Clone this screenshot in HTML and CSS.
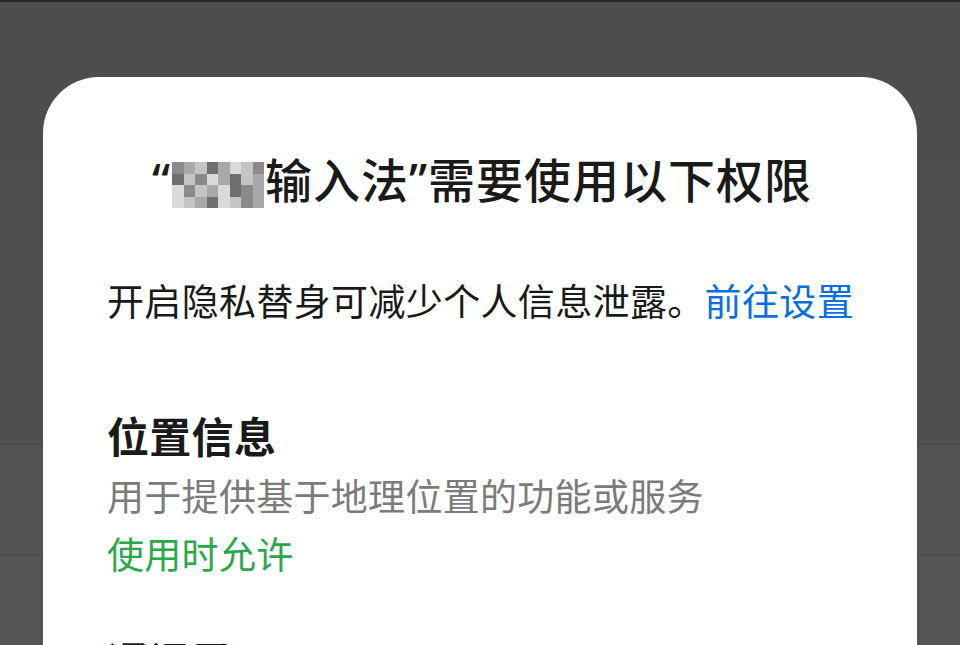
FILE: index.html
```html
<!DOCTYPE html>
<html lang="zh-CN">
<head>
    <meta charset="UTF-8">
    <meta name="viewport" content="width=device-width, initial-scale=1.0">
    <title>权限说明</title>
    <link rel="stylesheet" href="styles.css">
</head>
<body>
    <div class="sheet">
        <h1 class="title"><span class="quote">“</span><span class="mosaic"><i class="c1"></i><i class="c2"></i><i class="c3"></i><i class="c4"></i><i class="c2"></i><i class="c5"></i><i class="c3"></i><i class="c1"></i><i class="c4"></i><i class="c3"></i><i class="c1"></i><i class="c5"></i><i class="c2"></i><i class="c4"></i><i class="c3"></i><i class="c2"></i><i class="c5"></i><i class="c1"></i><i class="c3"></i><i class="c2"></i><i class="c5"></i><i class="c4"></i><i class="c1"></i><i class="c2"></i><i class="c5"></i><i class="c3"></i><i class="c2"></i><i class="c4"></i><i class="c5"></i><i class="c3"></i><i class="c1"></i><i class="c2"></i></span>输入法<span class="quote">”</span>需要使用以下权限</h1>

        <p class="notice">开启隐私替身可减少个人信息泄露。<a href="#" class="link">前往设置</a></p>

        <div class="perm">
            <div class="perm-name">位置信息</div>
            <div class="perm-desc">用于提供基于地理位置的功能或服务</div>
            <div class="perm-state">使用时允许</div>
        </div>

        <div class="perm">
            <div class="perm-name">通讯录</div>
            <div class="perm-desc">用于读取联系人以便快速输入</div>
            <div class="perm-state">使用时允许</div>
        </div>
    </div>
</body>
</html>
```

FILE: styles.css
```css
* { box-sizing: border-box; }
html, body { height: 100%; }
body { margin: 0; overflow: hidden; font-family: "Noto Sans CJK SC", "Noto Sans", sans-serif; color: #1a1a1a;
    background: linear-gradient(#262626 0, #262626 2px, #4d4d4d 2px, #4f4f4f 444px, #474747 444px, #474747 445px, #535353 445px, #535353 555px, #4a4a4a 555px, #4a4a4a 556px, #555555 556px); }
.sheet { margin: 77px 43px 0; min-height: 700px; background: #fff; border-radius: 56px 56px 0 0; padding: 71px 60px 0 64px; }
.title { margin: 0; height: 60px; text-align: center; font-size: 47px; font-weight: 500; line-height: 60px; letter-spacing: 1px; white-space: nowrap; }
.quote { font-family: "Noto Sans", sans-serif; font-weight: 500; }
.mosaic { display: inline-block; overflow: hidden; width: 92px; height: 46px; vertical-align: -10px; margin: 0 1px 0 1px; }
.mosaic i { float: left; width: 11.5px; height: 11.5px; }
.c1 { background: #8a8a8a; }
.c2 { background: #a9a9a9; }
.c3 { background: #c4c4c4; }
.c4 { background: #6f6f6f; }
.c5 { background: #dadada; }
.notice { margin: 67px 0 0; font-size: 37px; line-height: 50px; letter-spacing: 0.35px; white-space: nowrap; }
.link { color: #0b6fe4; text-decoration: none; }
.perm { margin-top: 82px; }
.perm + .perm { margin-top: 54px; }
.perm-name { font-size: 42px; font-weight: 700; line-height: 56px; letter-spacing: 0.3px; }
.perm-desc { margin-top: 7px; font-size: 37px; line-height: 50px; letter-spacing: 0.3px; color: #7b7b7b; }
.perm-state { margin-top: 8px; font-size: 37px; line-height: 50px; letter-spacing: 0.3px; color: #2ba84a; }
```
